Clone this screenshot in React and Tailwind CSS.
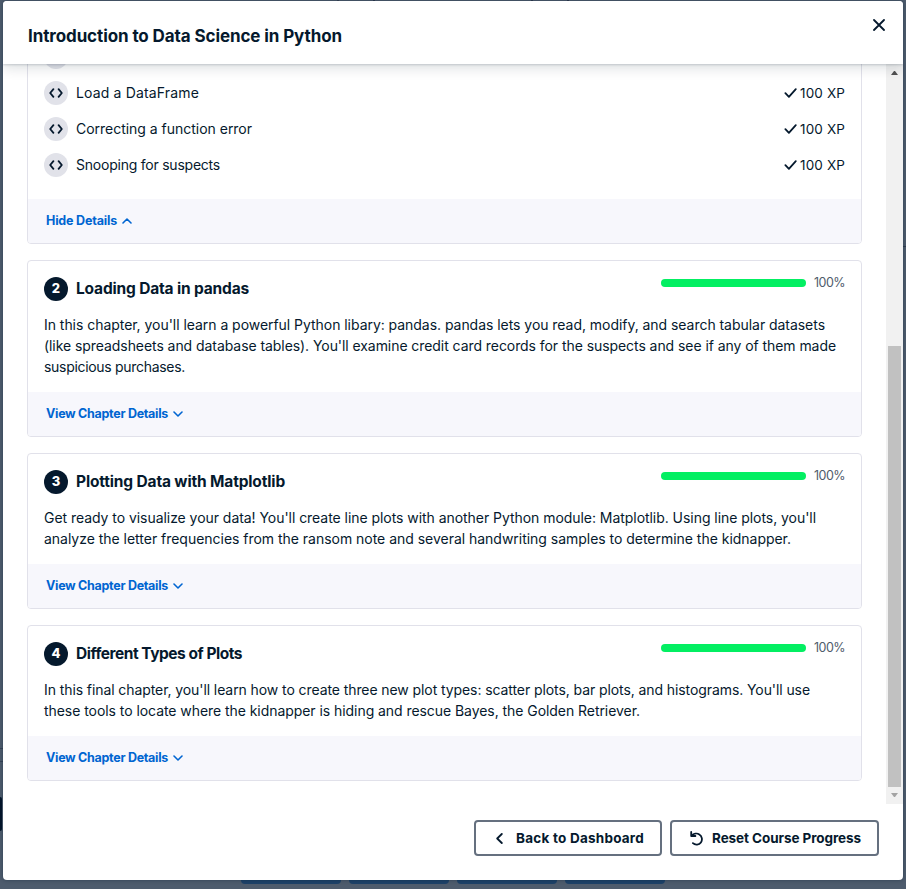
import { useLayoutEffect, useRef, useState } from "react";

// Single line of text whose tracking is adjusted so that it spans `width` pixels.
function Fit({ width, className = "", children }) {
  const ref = useRef(null);
  const [spacing, setSpacing] = useState(0);
  useLayoutEffect(() => {
    const natural = ref.current.getBoundingClientRect().width;
    setSpacing((width - natural) / children.length);
  }, []);
  return (
    <span className={`block whitespace-nowrap ${className}`}>
      <span ref={ref} style={{ letterSpacing: `${spacing}px` }}>
        {children}
      </span>
    </span>
  );
}

const chapters = [
  {
    number: "2",
    title: "Loading Data in pandas",
    titleWidth: 173,
    lines: [
      ["In this chapter, you'll learn a powerful Python libary: pandas. pandas lets you read, modify, and search tabular datasets", 781],
      ["(like spreadsheets and database tables). You'll examine credit card records for the suspects and see if any of them made", 792],
      ["suspicious purchases.", 141],
    ],
  },
  {
    number: "3",
    title: "Plotting Data with Matplotlib",
    titleWidth: 209,
    lines: [
      ["Get ready to visualize your data! You'll create line plots with another Python module: Matplotlib. Using line plots, you'll", 772],
      ["analyze the letter frequencies from the ransom note and several handwriting samples to determine the kidnapper.", 747],
    ],
  },
  {
    number: "4",
    title: "Different Types of Plots",
    titleWidth: 166,
    lines: [
      ["In this final chapter, you'll learn how to create three new plot types: scatter plots, bar plots, and histograms. You'll use", 766],
      ["these tools to locate where the kidnapper is hiding and rescue Bayes, the Golden Retriever.", 596],
    ],
  },
];

const exercises = [
  ["Load a DataFrame", 123],
  ["Correcting a function error", 176],
  ["Snooping for suspects", 144],
];

function CodeBadge() {
  return (
    <span className="flex size-6 shrink-0 items-center justify-center rounded-full bg-[#e1e2e9]">
      <svg className="h-[10px] w-[14px]" viewBox="0 0 14 10" fill="none" stroke="#05192d" strokeWidth="1.8" strokeLinecap="round" strokeLinejoin="round">
        <path d="M4.4 1.2 1.2 5l3.2 3.8M9.6 1.2 12.8 5 9.6 8.8" />
      </svg>
    </span>
  );
}

function DetailsBar({ label, width, open }) {
  return (
    <div className="flex h-11 items-center gap-[5px] bg-[#f7f7fc] pl-[18px] text-[12.5px] font-bold text-[#0065d1]">
      <Fit width={width}>{label}</Fit>
      <svg className="mb-px h-[6px] w-[10px]" viewBox="0 0 10 6" fill="none" stroke="currentColor" strokeWidth="1.6" strokeLinecap="round" strokeLinejoin="round">
        <path d={open ? "M1 5 5 1l4 4" : "M1 1l4 4 4-4"} />
      </svg>
    </div>
  );
}

function Chapter({ number, title, titleWidth, lines }) {
  return (
    <section className="mt-4 overflow-hidden rounded border border-[#e1e1ea]">
      <div className="px-4 pt-4 pb-[15px]">
        <div className="flex h-6 items-center">
          <span className="flex size-6 items-center justify-center rounded-full bg-[#05192d] text-[13px] font-extrabold text-white">
            {number}
          </span>
          <Fit width={titleWidth} className="ml-2 text-[15.5px] leading-6 font-bold">{title}</Fit>
          <span className="mb-3 ml-auto h-2 w-[145px] rounded bg-[#03ef62]" />
          <Fit width={31} className="mb-3 ml-2 w-[31px] text-[12.5px] text-[#4f5c6b]">100%</Fit>
        </div>
        <p className="mt-[13px] text-sm leading-[21px]">
          {lines.map(([text, width]) => (
            <Fit key={text} width={width}>{text}</Fit>
          ))}
        </p>
      </div>
      <DetailsBar label="View Chapter Details" width={122} />
    </section>
  );
}

export default function App() {
  return (
    <div className="relative h-[889px] w-[906px] overflow-hidden bg-[#4e5c6d] px-[3px] pt-px font-[Inter,sans-serif] text-[#05192d]">
      {/* Dimmed page edges around the dialog */}
      <div className="absolute top-0 left-[337px] h-px w-[2px] bg-[#3a4558]" />
      <div className="absolute top-0 left-[373px] h-px w-[2px] bg-[#303b50]" />
      <div className="absolute top-0 left-[531px] h-px w-[2px] bg-[#303b50]" />
      <div className="absolute top-0 left-[567px] h-px w-[2px] bg-[#303b50]" />
      <div className="absolute top-[748px] left-0 h-px w-[3px] bg-[#364457]" />
      <div className="absolute top-[761px] left-0 h-px w-[3px] bg-[#364457]" />
      <div className="absolute top-[797px] left-0 h-[34px] w-[2px] rounded-r-sm bg-[#03152a]" />
      <div className="absolute top-[246px] right-0 h-px w-[3px] bg-[#2f3d50]" />
      <div className="absolute bottom-[5px] left-[241px] flex h-2 gap-2">
        <div className="w-[100px] rounded-b bg-[#1d4269]" />
        <div className="w-[100px] rounded-b bg-[#1d4269]" />
        <div className="w-[100px] rounded-b bg-[#1d4269]" />
        <div className="w-[100px] rounded-b bg-[#1d4269]" />
      </div>

      <div className="relative flex h-[879px] flex-col overflow-hidden rounded bg-white shadow-[0_0_4px_rgba(5,25,45,0.4)]">
        <header className="relative z-10 flex h-[63px] shrink-0 justify-between bg-white pr-[18px] pl-[25px] shadow-[0_1px_2px_rgba(5,25,45,0.16),0_4px_12px_rgba(5,25,45,0.14)]">
          <Fit width={314} className="mt-[23px] text-[17px] leading-6 font-bold">Introduction to Data Science in Python</Fit>
          <svg className="mt-[18px] size-3" viewBox="0 0 12 12" fill="none" stroke="currentColor" strokeWidth="1.8" strokeLinecap="round">
            <path d="M1 1l10 10M11 1 1 11" />
          </svg>
        </header>

        <div className="flex h-[740px] shrink-0 overflow-hidden">
          <main className="w-[859px] shrink-0 pl-6">
            <section className="-mt-[26px] overflow-hidden rounded border border-[#e1e1ea]">
              <div className="px-4 pb-4 text-sm">
                <div className="flex h-9 items-center">
                  <CodeBadge />
                </div>
                {exercises.map(([name, width]) => (
                  <div key={name} className="flex h-9 items-center">
                    <CodeBadge />
                    <Fit width={width} className="ml-2">{name}</Fit>
                    <svg className="mr-[3px] ml-auto h-[10px] w-[13px]" viewBox="0 0 13 10" fill="none" stroke="currentColor" strokeWidth="1.8" strokeLinecap="round" strokeLinejoin="round">
                      <path d="M1.4 5.2 4.9 8.8 11.8 1.1" />
                    </svg>
                    <Fit width={45} className="w-[45px] pt-px text-[13.5px]">100 XP</Fit>
                  </div>
                ))}
              </div>
              <DetailsBar label="Hide Details" width={71} open />
            </section>
            {chapters.map((chapter) => (
              <Chapter key={chapter.number} {...chapter} />
            ))}
          </main>
          <div className="ml-auto flex w-[17px] flex-col items-center bg-[#f1f1f1]">
            <svg className="mt-[7px] h-1 w-[7px]" viewBox="0 0 7 4" fill="#505050">
              <path d="M3 0h1l3 4H0z" />
            </svg>
            <div className="mt-auto h-[441px] w-[13px] bg-[#c1c1c1]" />
            <svg className="mt-[6px] mb-[7px] h-1 w-[7px]" viewBox="0 0 7 4" fill="#a3a3a3">
              <path d="M0 0h7L4 4H3z" />
            </svg>
          </div>
        </div>

        <footer className="flex justify-end gap-2 pt-4 pr-6 text-[13.5px] font-bold">
          <button className="flex h-9 w-[188px] items-center rounded border-2 border-[#65707f] pl-[20px]">
            <svg className="h-[11px] w-[7px]" viewBox="0 0 7 11" fill="none" stroke="currentColor" strokeWidth="1.8" strokeLinecap="round" strokeLinejoin="round">
              <path d="M5.8 1 1.2 5.5 5.8 10" />
            </svg>
            <Fit width={128} className="ml-[13px]">Back to Dashboard</Fit>
          </button>
          <button className="flex h-9 w-[209px] items-center rounded border-2 border-[#65707f] pl-[18px]">
            <svg className="h-[15px] w-[13px]" viewBox="0 0 13 15" fill="none" stroke="currentColor" strokeWidth="1.8" strokeLinecap="round" strokeLinejoin="round">
              <path d="M1.2 1v4h4.2M1.6 4.8C3.6 2.6 7 2 9.3 3.4c2.8 1.7 3.4 5.4 1.6 8-1.8 2.5-5.6 3-8 .8" />
            </svg>
            <Fit width={149} className="ml-[9px]">Reset Course Progress</Fit>
          </button>
        </footer>
      </div>
    </div>
  );
}
